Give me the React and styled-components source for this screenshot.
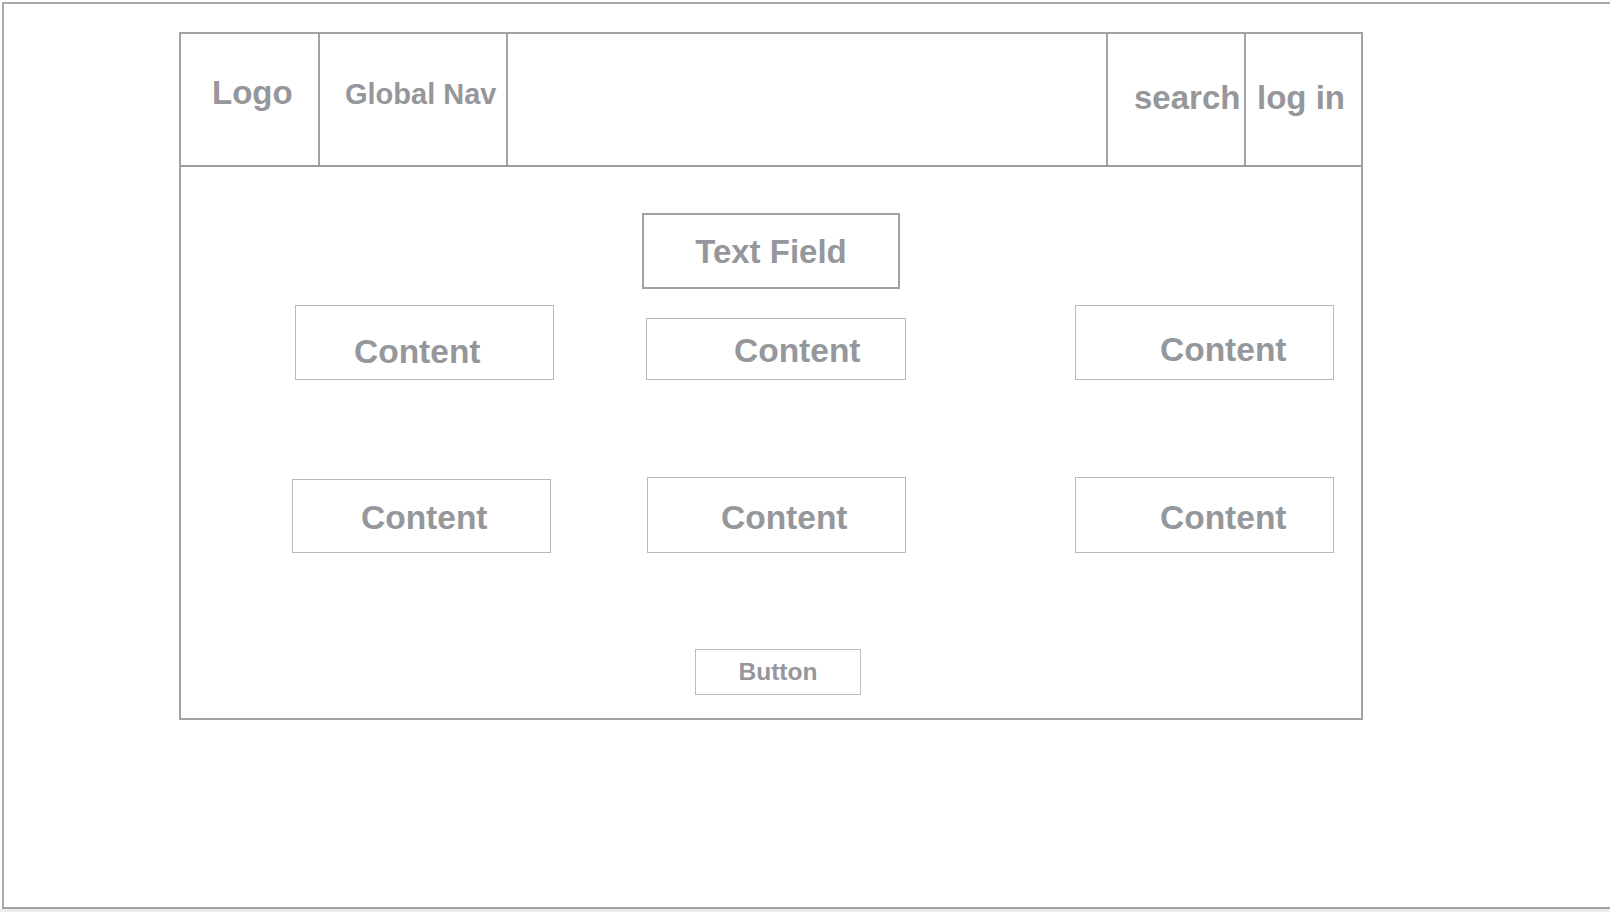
import React from 'react'
import styled, { createGlobalStyle } from 'styled-components'

const GlobalStyle = createGlobalStyle`
  html, body {
    margin: 0;
    padding: 0;
    background: #ffffff;
  }
  body {
    font-family: "Liberation Sans", Arial, Helvetica, sans-serif;
  }
`

const Page = styled.div`
  width: 1610px;
  height: 912px;
  display: flex;
  flex-direction: column;
  overflow: hidden;
  background: #ffffff;
`

const Frame = styled.div`
  height: 907px;
  margin: 2px 0 0 2px;
  box-sizing: border-box;
  border-top: 2px solid #a9a9a9;
  border-left: 2px solid #a9a9a9;
  border-bottom: 2px solid #a2a2a2;
  background: #ffffff;
`

const Strip = styled.div`
  height: 3px;
  background: #ececec;
`

const Board = styled.div`
  width: 1184px;
  height: 688px;
  margin: 28px 0 0 175px;
  box-sizing: border-box;
  border: 2px solid #a3a3a3;
  display: flex;
  flex-direction: column;
`

const Header = styled.div`
  display: flex;
  height: 133px;
  box-sizing: border-box;
  border-bottom: 2px solid #9c9c9c;
`

const Cell = styled.div`
  width: ${(p) => (p.$width ? `${p.$width}px` : 'auto')};
  flex: ${(p) => (p.$width ? '0 0 auto' : '1 1 auto')};
  box-sizing: border-box;
  border-right: ${(p) => (p.$last ? 'none' : '2px solid #a3a3a3')};
  padding: ${(p) => p.$top || 0}px 0 0 ${(p) => p.$left || 0}px;
  display: flex;
  align-items: flex-start;
`

const Label = styled.span`
  font-size: ${(p) => p.$size || 33.5}px;
  font-weight: bold;
  line-height: 1;
  color: #95979a;
  white-space: nowrap;
`

const Body = styled.div`
  flex: 1;
  display: flex;
  flex-direction: column;
  padding-top: 46px;
`

const TextField = styled.div`
  align-self: center;
  width: 258px;
  height: 76px;
  box-sizing: border-box;
  border: 2px solid #a2a2a2;
  display: flex;
  align-items: center;
  justify-content: center;
  padding-top: 1px;
`

const Grid = styled.div`
  display: grid;
  grid-template-columns: 353px 429px 1fr;
  grid-auto-rows: auto;
  row-gap: 97px;
  align-items: end;
  margin-top: 16px;
  padding-left: 112px;
`

const Card = styled.div`
  width: ${(p) => p.$w}px;
  height: ${(p) => p.$h}px;
  margin-left: ${(p) => p.$dx || 0}px;
  box-sizing: border-box;
  border: 1px solid #b9b9b9;
  padding: ${(p) => p.$ty}px 0 0 ${(p) => p.$tx}px;
  display: flex;
  align-items: flex-start;
`

const Button = styled.div`
  align-self: center;
  margin: 96px 0 0 14px;
  width: 166px;
  height: 46px;
  box-sizing: border-box;
  border: 1px solid #bdbdbd;
  display: flex;
  align-items: center;
  justify-content: center;
  padding-top: 1px;
`

const cards = [
  { w: 259, h: 75, dx: 2, tx: 58, ty: 29 },
  { w: 260, h: 62, dx: 0, tx: 87, ty: 15 },
  { w: 259, h: 75, dx: 0, tx: 84, ty: 27 },
  { w: 259, h: 74, dx: -1, tx: 68, ty: 21 },
  { w: 259, h: 76, dx: 1, tx: 73, ty: 23 },
  { w: 259, h: 76, dx: 0, tx: 84, ty: 23 },
]

function App() {
  return (
    <>
      <GlobalStyle />
      <Page>
        <Frame>
          <Board>
            <Header>
              <Cell $width={139} $left={31} $top={42}>
                <Label $size={33}>Logo</Label>
              </Cell>
              <Cell $width={188} $left={25} $top={46}>
                <Label $size={29}>Global Nav</Label>
              </Cell>
              <Cell />
              <Cell $width={138} $left={26} $top={47}>
                <Label $size={33}>search</Label>
              </Cell>
              <Cell $width={115} $left={11} $top={47} $last>
                <Label $size={33}>log in</Label>
              </Cell>
            </Header>
            <Body>
              <TextField>
                <Label $size={33}>Text Field</Label>
              </TextField>
              <Grid>
                {cards.map((c, i) => (
                  <Card key={i} $w={c.w} $h={c.h} $dx={c.dx} $tx={c.tx} $ty={c.ty}>
                    <Label>Content</Label>
                  </Card>
                ))}
              </Grid>
              <Button>
                <Label $size={24.5}>Button</Label>
              </Button>
            </Body>
          </Board>
        </Frame>
        <Strip />
      </Page>
    </>
  )
}

export default App
